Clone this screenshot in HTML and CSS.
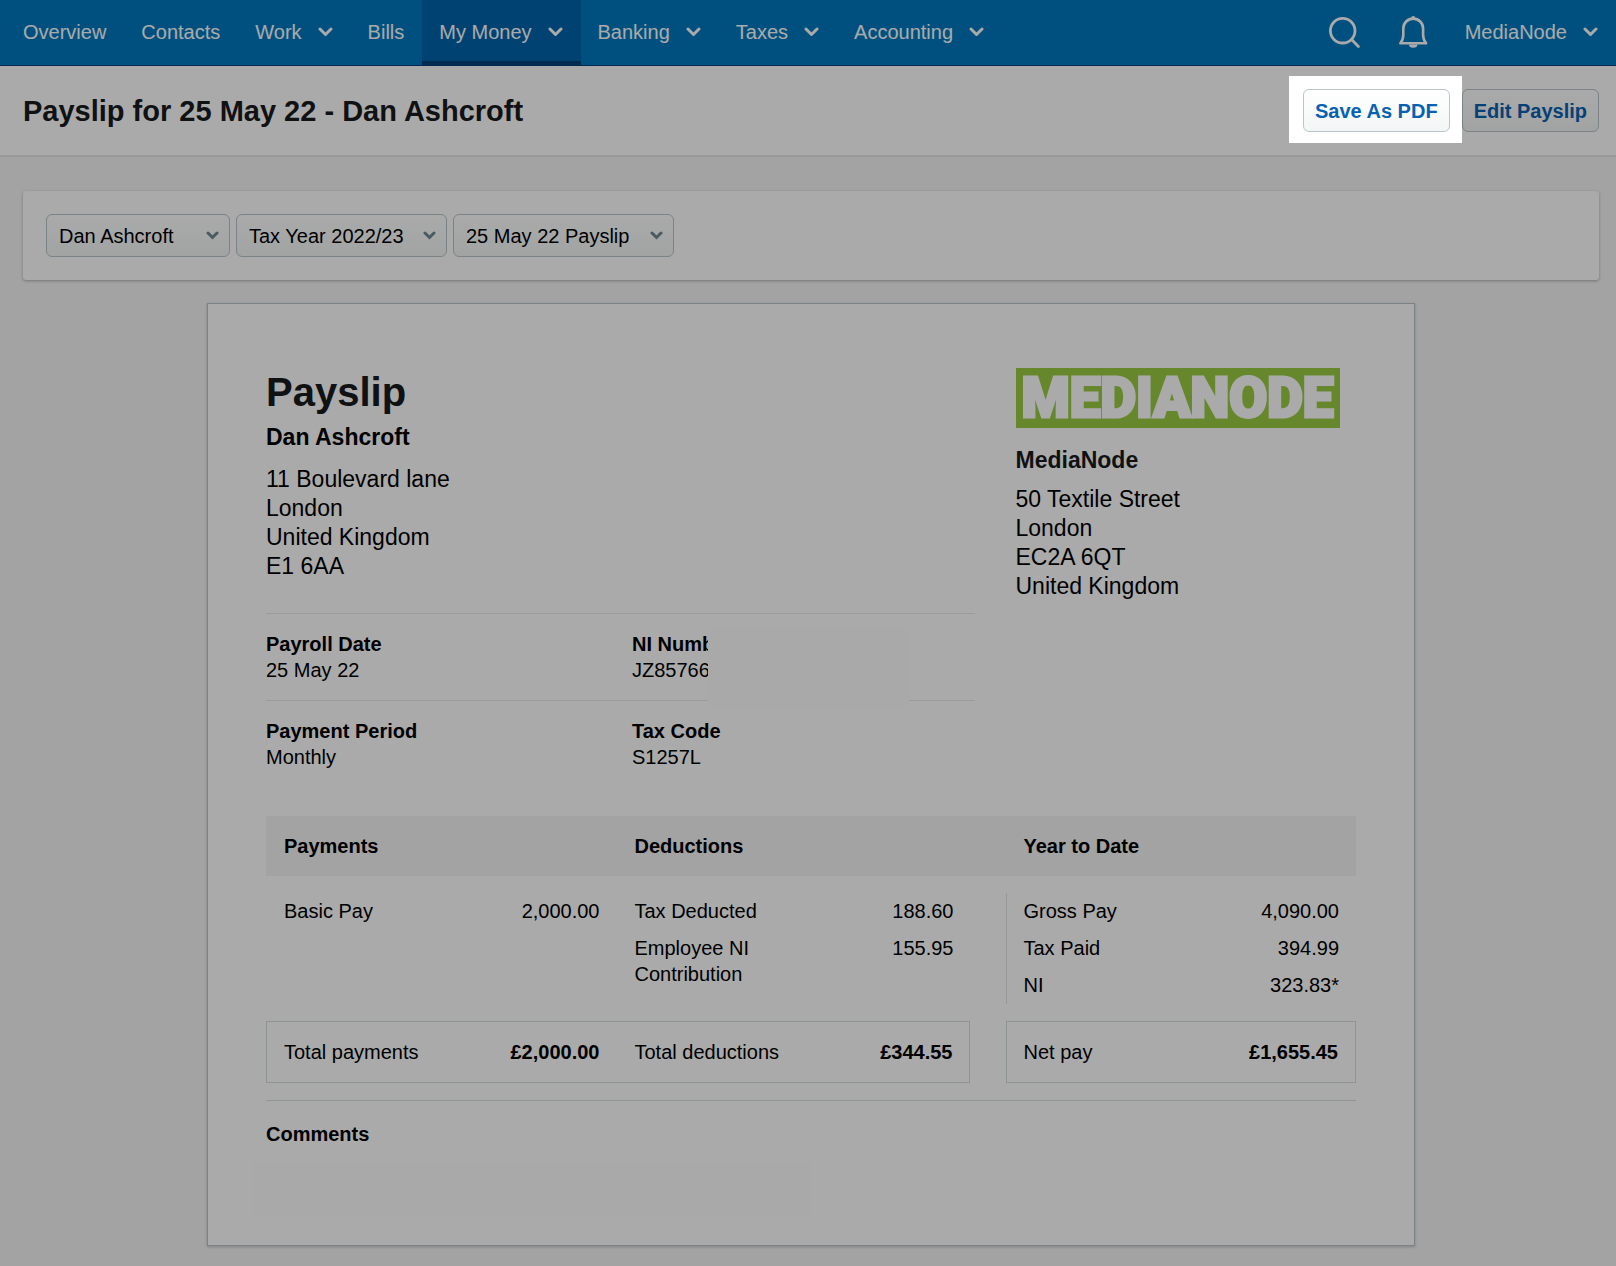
FILE: index.html
```html
<!DOCTYPE html>
<html lang="en">

    <head>

        <title>Payslip for 25 May 22 - Dan Ashcroft</title>
        <meta charset="utf-8"/>
        <meta name="viewport" content="width=device-width, initial-scale=1"/>

        <link rel="stylesheet" href="styles.css">

    </head>

    <body>

        <nav class="nav">

            <a class="nav-item" href="#">Overview</a>
            <a class="nav-item" href="#">Contacts</a>
            <a class="nav-item" href="#">Work <svg class="chevron" viewBox="0 0 15 10"><path d="M2 2l5.500 5.500L13 2"/></svg></a>
            <a class="nav-item" href="#">Bills</a>
            <a class="nav-item active" href="#">My Money <svg class="chevron" viewBox="0 0 15 10"><path d="M2 2l5.500 5.500L13 2"/></svg></a>
            <a class="nav-item" href="#">Banking <svg class="chevron" viewBox="0 0 15 10"><path d="M2 2l5.500 5.500L13 2"/></svg></a>
            <a class="nav-item" href="#">Taxes <svg class="chevron" viewBox="0 0 15 10"><path d="M2 2l5.500 5.500L13 2"/></svg></a>
            <a class="nav-item" href="#">Accounting <svg class="chevron" viewBox="0 0 15 10"><path d="M2 2l5.500 5.500L13 2"/></svg></a>

            <div class="nav-right">
                <button class="icon-button" type="button" aria-label="Search">
                    <svg viewBox="0 0 32 32" fill="none" stroke="currentColor" stroke-width="2.800" stroke-linecap="round">
                        <circle cx="13.700" cy="14.700" r="12.300"/>
                        <path d="M22.800 23.800L29.400 30.400"/>
                    </svg>
                </button>
                <button class="icon-button" type="button" aria-label="Notifications">
                    <svg viewBox="0 0 32 32" fill="none" stroke="currentColor" stroke-width="2.600" stroke-linejoin="round" stroke-linecap="round">
                        <path d="M3.300 27.300C5.600 24.500 6.300 22 6.300 19V12.500A9.900 9.900 0 0 1 26.100 12.500V19C26.100 22 26.800 24.500 29.100 27.300Z"/>
                        <path d="M12 28.500a4.200 3.300 0 0 0 8.400 0Z" fill="currentColor" stroke="none"/>
                        <circle cx="16.200" cy="2" r="2" fill="currentColor" stroke="none"/>
                    </svg>
                </button>
            </div>
            <a class="nav-item" href="#">MediaNode <svg class="chevron" viewBox="0 0 15 10"><path d="M2 2l5.500 5.500L13 2"/></svg></a>

        </nav>

        <header class="page-header">
            <h1>Payslip for 25 May 22 - Dan Ashcroft</h1>
            <div class="actions">
                <div class="spotlight"><button class="button" type="button">Save As PDF</button></div>
                <button class="button" type="button">Edit Payslip</button>
            </div>
        </header>

        <main class="content">

            <form class="filters">
                <select class="select-employee" aria-label="Employee">
                    <option>Dan Ashcroft</option>
                </select>
                <select class="select-year" aria-label="Tax year">
                    <option>Tax Year 2022/23</option>
                </select>
                <select class="select-payslip" aria-label="Payslip">
                    <option>25 May 22 Payslip</option>
                </select>
            </form>

            <article class="sheet">

                <div class="top">

                    <section class="employee">
                        <h2>Payslip</h2>
                        <h3>Dan Ashcroft</h3>
                        <address>
                            11 Boulevard lane<br>
                            London<br>
                            United Kingdom<br>
                            E1 6AA
                        </address>

                        <dl class="details">
                            <div>
                                <dt>Payroll Date</dt>
                                <dd>25 May 22</dd>
                            </div>
                            <div class="redacted">
                                <dt>NI Number</dt>
                                <dd>JZ85766</dd>
                            </div>
                        </dl>
                        <dl class="details">
                            <div>
                                <dt>Payment Period</dt>
                                <dd>Monthly</dd>
                            </div>
                            <div>
                                <dt>Tax Code</dt>
                                <dd>S1257L</dd>
                            </div>
                        </dl>
                    </section>

                    <section class="company">
                        <div class="logo">MEDIANODE</div>
                        <h3>MediaNode</h3>
                        <address>
                            50 Textile Street<br>
                            London<br>
                            EC2A 6QT<br>
                            United Kingdom
                        </address>
                    </section>

                </div>

                <table class="figures">
                    <colgroup>
                        <col class="col-label">
                        <col>
                        <col class="col-label">
                        <col class="col-deduction">
                        <col class="col-gap">
                        <col class="col-label">
                        <col>
                    </colgroup>
                    <thead>
                        <tr>
                            <th colspan="2">Payments</th>
                            <th colspan="3">Deductions</th>
                            <th colspan="2">Year to Date</th>
                        </tr>
                    </thead>
                    <tbody>
                        <tr class="spacer"><td colspan="7"></td></tr>
                        <tr>
                            <td>Basic Pay</td>
                            <td class="amount">2,000.00</td>
                            <td>Tax Deducted</td>
                            <td class="amount">188.60</td>
                            <td></td>
                            <td class="ytd">Gross Pay</td>
                            <td class="amount">4,090.00</td>
                        </tr>
                        <tr>
                            <td rowspan="2"></td>
                            <td rowspan="2"></td>
                            <td rowspan="2">Employee NI Contribution</td>
                            <td rowspan="2" class="amount">155.95</td>
                            <td rowspan="2"></td>
                            <td class="ytd">Tax Paid</td>
                            <td class="amount">394.99</td>
                        </tr>
                        <tr>
                            <td class="ytd">NI</td>
                            <td class="amount">323.83*</td>
                        </tr>
                        <tr class="spacer"><td colspan="7"></td></tr>
                    </tbody>
                    <tfoot>
                        <tr>
                            <td class="box box-start">Total payments</td>
                            <td class="box amount">£2,000.00</td>
                            <td class="box">Total deductions</td>
                            <td class="box box-end amount">£344.55</td>
                            <td></td>
                            <td class="box box-start">Net pay</td>
                            <td class="box box-end amount">£1,655.45</td>
                        </tr>
                    </tfoot>
                </table>

                <section class="comments">
                    <h4>Comments</h4>
                    <div class="comment-text"></div>
                </section>

            </article>

        </main>

    </body>

</html>
```
FILE: styles.css
```css
* {
    box-sizing: border-box;
    margin: 0;
    padding: 0;
}

body {
    background-color: #f5f5f5;
    color: #000;
    font-family: "Liberation Sans", Arial, sans-serif;
    font-size: 20px;
    line-height: 26px;
}

button, select {
    font: inherit;
}

/* navigation */

.nav {
    display: flex;
    align-items: stretch;
    height: 66px;
    padding-left: 6px;

    background-color: #0079bf;
    border-bottom: 1px solid #003f7d;
    color: white;
}

.nav-item {
    display: flex;
    align-items: center;
    gap: 16px;
    padding: 0 18px 1px 17px;

    color: white;
    text-decoration: none;
    white-space: nowrap;
}

.nav-item.active {
    background-color: #0065ab;
    box-shadow: inset 0 -4px #00437b;
}

.chevron {
    width: 15px;
    height: 10px;

    fill: none;
    stroke: currentColor;
    stroke-width: 3;
    stroke-linecap: round;
    stroke-linejoin: round;
}

.nav-right {
    display: flex;
    align-items: center;
    gap: 36px;
    margin-left: auto;
    padding: 0 19px 1px 0;
}

.icon-button {
    width: 32px;
    height: 32px;

    background: none;
    border: none;
    color: white;
    cursor: pointer;
}

.icon-button svg {
    display: block;
    overflow: visible;
}

/* page header */

.page-header {
    display: flex;
    justify-content: space-between;
    align-items: center;
    min-height: 91px;
    padding: 0 17px 0 23px;

    background-color: white;
    border-bottom: 2px solid #e6e8e9;
}

h1 {
    color: #171a1c;
    font-size: 29px;
    line-height: 34px;
}

.actions {
    display: flex;
    gap: 12px;
}

.button {
    height: 43px;
    padding: 0 11px;

    background: linear-gradient(white, #f3f6f6);
    border: 1px solid #b9c5ca;
    border-radius: 6px;
    color: #0862b1;
    font-weight: bold;
    cursor: pointer;
}

/* dims everything on the page except the wrapped button */
.spotlight {
    position: relative;
}

.spotlight::after {
    content: "";
    position: absolute;
    inset: -13px -12px -11px -14px;
    z-index: 10;
    box-shadow: 0 0 0 4000px rgba(0, 0, 0, 0.333);
    pointer-events: none;
}

/* content */

.content {
    padding: 34px 17px 20px 23px;
}

.filters {
    display: flex;
    gap: 6px;
    padding: 23px;

    background-color: white;
    border-radius: 3px;
    box-shadow: 0 1px 3px rgba(0, 0, 0, 0.3);
}

.filters select {
    height: 43px;
    padding: 0 32px 0 12px;

    appearance: none;
    background: url("data:image/svg+xml,%3Csvg xmlns='http://www.w3.org/2000/svg' viewBox='0 0 13 9'%3E%3Cpath d='M2 2l4.500 4.500L11 2' fill='none' stroke='%23708791' stroke-width='3' stroke-linecap='round'/%3E%3C/svg%3E") no-repeat right 10px center / 13px 9px,
                linear-gradient(white, #f3f6f6);
    border: 1px solid #b9c5ca;
    border-radius: 6px;
    color: #000;
}

.select-employee { width: 184px; }
.select-year     { width: 211px; }
.select-payslip  { width: 221px; }

.sheet {
    max-width: 1208px;
    margin: 23px auto 0;
    padding: 64px 58px 30px;

    background-color: white;
    border: 1px solid #b9c5ca;
    box-shadow: 0 1px 3px rgba(0, 0, 0, 0.2);
}

.top {
    display: grid;
    grid-template-columns: 65% 1fr;
    column-gap: 41px;
}

h2 {
    color: #171a1c;
    font-size: 40px;
    line-height: 48px;
}

h3, address {
    font-size: 23px;
    font-style: normal;
    line-height: 29px;
}

.employee h3 {
    margin: 7px 0 13px;
}

.employee address {
    margin-bottom: 32px;
}

.company h3 {
    margin: 18px 0 10px;
    color: #171a1c;
}

.logo {
    width: 324px;
    height: 60px;

    background-color: #9bcb43;
    color: white;
    font-family: Roboto, "Liberation Sans", sans-serif;
    font-size: 55px;
    font-weight: 900;
    line-height: 60px;
    text-align: center;
    -webkit-text-stroke: 3px white;
}

.details {
    display: grid;
    grid-template-columns: 366px 1fr;
    padding: 17px 0;

    border-top: 1px solid #e6eaeb;
}

.details dt {
    font-weight: bold;
}

.redacted {
    position: relative;
}

/* cover over the private part of the value */
.redacted::after {
    content: "";
    position: absolute;
    top: -3px;
    left: 76px;
    width: 201px;
    height: 80px;
    background-color: #fefefe;
}

/* figures */

.figures {
    width: 100%;
    margin-top: 29px;
    border-spacing: 0;
    table-layout: fixed;
}

.col-label     { width: 200px; }
.col-deduction { width: 154px; }
.col-gap       { width: 35px; }

.figures th {
    padding: 17px 18px;
    background-color: #f5f5f5;
    text-align: left;
}

.figures td {
    padding: 5px 17px 6px 18px;
    vertical-align: top;
}

.figures .spacer td {
    height: 17px;
    padding: 0;
}

.figures .amount {
    text-align: right;
}

.figures .ytd {
    padding-left: 17px;
    border-left: 1px solid #e2e6e7;
}

.figures .box {
    padding: 17px 17px 17px 18px;
    border: solid #d5dddf;
    border-width: 1px 0;
}

.figures .box-start {
    padding-left: 17px;
    border-left-width: 1px;
}

.figures .box-end {
    border-right-width: 1px;
}

.figures .box.amount {
    font-weight: bold;
}

/* comments */

.comments {
    margin-top: 17px;
    padding-top: 20px;
    border-top: 1px solid #d9e0e4;
}

.comment-text {
    width: 558px;
    height: 53px;
    margin: 15px 0 0 -13px;
    background-color: #fefefe;
}
```
